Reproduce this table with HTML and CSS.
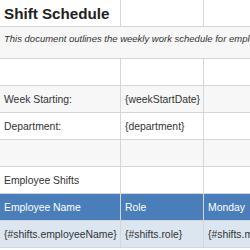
FILE: index.html
```html
<!DOCTYPE html>
<html>
<head>
<meta charset="utf-8">
<link rel="stylesheet" href="styles.css">
</head>
<body>
<table class="sheet">
  <colgroup>
    <col class="c1"><col class="c2"><col class="c3"><col class="c4">
  </colgroup>
  <tr><td class="title">Shift Schedule</td><td></td><td></td><td></td></tr>
  <tr class="alt"><td class="desc" colspan="4">This document outlines the weekly work schedule for employees.</td></tr>
  <tr><td></td><td></td><td></td><td></td></tr>
  <tr class="alt"><td>Week Starting:</td><td>{weekStartDate}</td><td></td><td></td></tr>
  <tr><td>Department:</td><td>{department}</td><td></td><td></td></tr>
  <tr class="alt"><td></td><td></td><td></td><td></td></tr>
  <tr><td>Employee Shifts</td><td></td><td></td><td></td></tr>
  <tr class="head"><td>Employee Name</td><td>Role</td><td>Monday</td><td>Tuesday</td></tr>
  <tr class="data"><td>{#shifts.employeeName}</td><td>{#shifts.role}</td><td>{#shifts.monday}</td><td>{#shifts.tuesday}</td></tr>
</table>
</body>
</html>
```
FILE: styles.css
```css
html, body {
  margin: 0;
  padding: 0;
  background: #ffffff;
  overflow: hidden;
}
.sheet {
  border-collapse: collapse;
  table-layout: fixed;
  width: 444px;
  margin: -1px 0 0 -1px;
  font-family: "Liberation Sans", Arial, sans-serif;
  font-size: 10.4px;
  line-height: 13px;
  color: #333333;
}
.c1 { width: 121px; }
.c2 { width: 83px; }
.c3 { width: 120px; }
.c4 { width: 120px; }
.sheet td {
  border: 1px solid #d6d6d6;
  height: 26px;
  padding: 0 4px;
  white-space: nowrap;
  overflow: hidden;
  vertical-align: middle;
}
.sheet tr.alt td { background: #f7f7f7; }
.sheet td.title {
  font-size: 15.2px;
  font-weight: bold;
  color: #222222;
}
.sheet td.desc {
  font-size: 9.5px;
  font-style: italic;
  vertical-align: top;
  padding-top: 5px;
  background: #f3f3f3;
}
.sheet tr.head td {
  background: #4a7ebb;
  color: #ffffff;
}
.sheet tr.data td { background: #dce6f1; }
```
